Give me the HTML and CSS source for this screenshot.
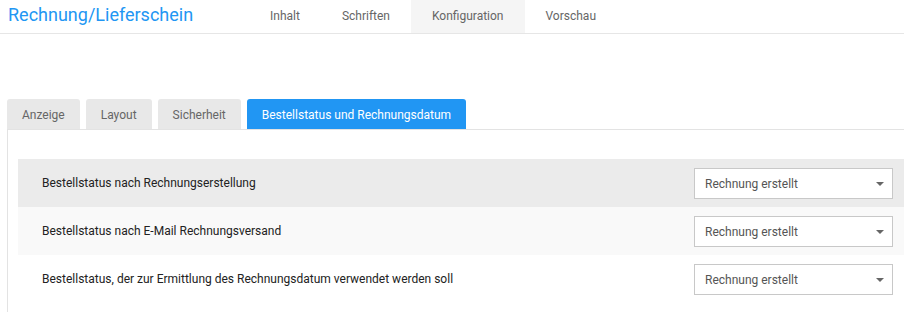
FILE: index.html
```html
<!DOCTYPE html>
<html lang="de">
<head>
<meta charset="utf-8">
<title>Rechnung/Lieferschein</title>
<link rel="stylesheet" href="styles.css">
</head>
<body>
<header class="topbar">
  <div class="title">Rechnung/Lieferschein</div>
  <nav class="mainnav">
    <a class="navitem">Inhalt</a>
    <a class="navitem">Schriften</a>
    <a class="navitem active">Konfiguration</a>
    <a class="navitem">Vorschau</a>
  </nav>
</header>
<div class="tabs">
  <div class="tab">Anzeige</div>
  <div class="tab">Layout</div>
  <div class="tab">Sicherheit</div>
  <div class="tab current">Bestellstatus und Rechnungsdatum</div>
</div>
<div class="panel">
  <div class="row row-dark">
    <div class="label">Bestellstatus nach Rechnungserstellung</div>
    <div class="select"><span>Rechnung erstellt</span><i class="caret"></i></div>
  </div>
  <div class="row row-light">
    <div class="label">Bestellstatus nach E-Mail Rechnungsversand</div>
    <div class="select"><span>Rechnung erstellt</span><i class="caret"></i></div>
  </div>
  <div class="row">
    <div class="label">Bestellstatus, der zur Ermittlung des Rechnungsdatum verwendet werden soll</div>
    <div class="select"><span>Rechnung erstellt</span><i class="caret"></i></div>
  </div>
</div>
</body>
</html>
```
FILE: styles.css
```css
html, body {
  margin: 0;
  padding: 0;
  background: #fff;
  font-family: Roboto, "Liberation Sans", Arial, sans-serif;
  overflow: hidden;
}
.topbar {
  display: flex;
  height: 33px;
  border-bottom: 1px solid #e6e6e6;
}
.title {
  flex: 0 0 249px;
  box-sizing: border-box;
  padding-left: 8px;
  font-size: 18px;
  line-height: 30px;
  color: #2196f3;
}
.mainnav {
  display: flex;
}
.navitem {
  display: block;
  padding: 0 21px;
  font-size: 12px;
  line-height: 32px;
  color: #666;
}
.navitem.active {
  background: #f5f5f5;
}
.tabs {
  display: flex;
  gap: 6px;
  margin-top: 65px;
  padding-left: 7px;
}
.tab {
  height: 29px;
  padding: 1px 15px 0;
  font-size: 12px;
  line-height: 30px;
  color: #666;
  background: #e8e8e8;
  border-radius: 3px 3px 0 0;
}
.tab.current {
  background: #2196f3;
  color: #fff;
}
.panel {
  margin-left: 7px;
  border-left: 1px solid #e3e3e3;
  border-top: 1px solid #e3e3e3;
  padding: 29px 0 9px 10px;
}
.row {
  display: flex;
  align-items: center;
  justify-content: space-between;
  height: 48px;
  padding: 0 11px 0 24px;
}
.row-dark {
  background: #ebebeb;
}
.row-light {
  background: #f9f9f9;
}
.label {
  font-size: 12px;
  color: #222;
}
.select {
  box-sizing: border-box;
  width: 199px;
  height: 31px;
  margin-top: 1px;
  padding: 0 10px;
  border: 1px solid #c8c8c8;
  background: #fff;
  display: flex;
  align-items: center;
  justify-content: space-between;
  font-size: 12px;
  color: #555;
}
.caret {
  display: block;
  width: 0;
  height: 0;
  margin-right: -2px;
  margin-top: 1px;
  border-left: 4px solid transparent;
  border-right: 4px solid transparent;
  border-top: 4px solid #666;
}
```
